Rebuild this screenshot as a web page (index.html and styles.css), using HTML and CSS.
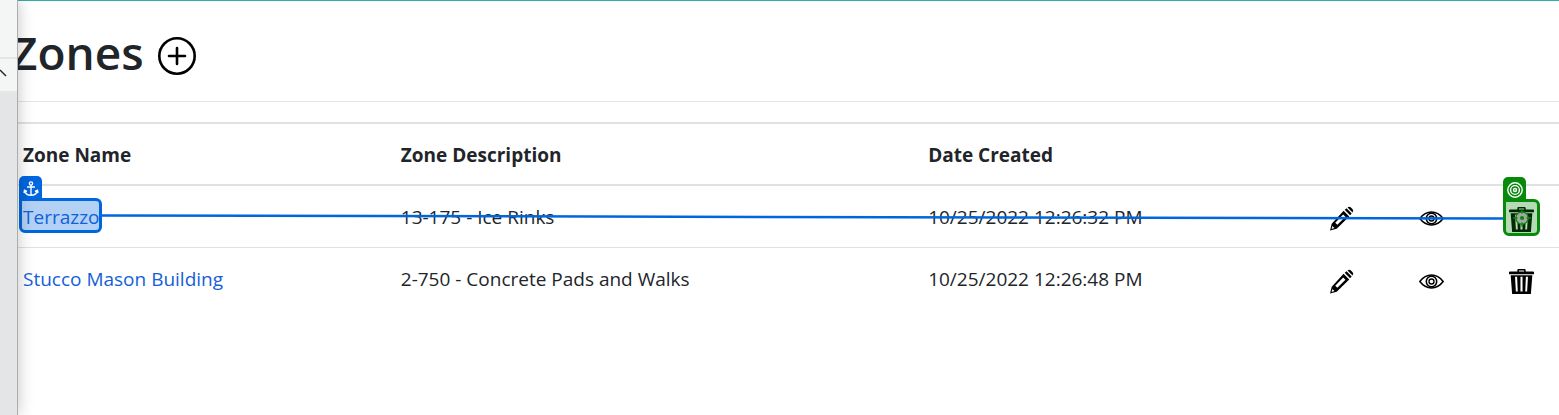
FILE: index.html
```html
<!DOCTYPE html>
<html lang="en">
<head>
<meta charset="utf-8">
<title>Zones</title>
<link rel="stylesheet" href="styles.css">
</head>
<body>
<svg class="defs" aria-hidden="true">
  <symbol id="pencil" viewBox="0 0 24 24">
    <path fill-rule="evenodd" d="M14 4.600 19.400 10 7.400 21.800 1 23.400 2.600 17ZM13.600 8.200 6 16 8 18 15.800 10.400ZM3.300 19.200 2.500 22 5.200 21.200Z"/>
    <path d="M15.100 3.700 16.800 2.200 21.800 7.200 20.200 8.800ZM17.800 1.400Q19.400 0 20.800 1.300L22.700 3.200Q24 4.700 22.600 6.200Z"/>
  </symbol>
  <symbol id="eye" viewBox="0 0 24 24">
    <g fill="none" stroke="currentColor" stroke-width="1.500">
      <path d="M.8 12Q5.500 5.800 12 5.800T23.200 12Q18.500 18.200 12 18.200T.8 12Z"/>
      <circle cx="12" cy="12" r="5"/>
      <circle cx="12" cy="12" r="2.400" stroke-width="1.300"/>
    </g>
  </symbol>
  <symbol id="trash" viewBox="0 0 24 24">
    <path d="M0 5V3.200Q0 2.500 1 2.500H8V1Q8 0 9 0H15Q16 0 16 1V2.500H23Q24 2.500 24 3.200V5ZM9.500 2.500H14.500V1.400H9.500Z"/>
    <path fill-rule="evenodd" d="M1.600 6H22.400L21 24H3ZM5.800 7.500 6.600 21.500H8.400L7.800 7.500ZM11 7.500V21.500H13V7.500ZM16.200 7.500 15.600 21.500H17.400L18.200 7.500Z"/>
  </symbol>
</svg>

<aside class="side-window">
  <div class="side-top"></div>
  <div class="side-tool">
    <svg class="side-caret" viewBox="0 0 8 12" aria-hidden="true"><path d="M0 3 6 9"/></svg>
  </div>
</aside>

<main class="page">
  <header class="page-head">
    <h1>Zones</h1>
    <button class="add" type="button" aria-label="Add zone">
      <svg viewBox="0 0 38 38" aria-hidden="true"><circle cx="19" cy="19" r="17.700"/><path d="M19 11V27M11 19H27"/></svg>
    </button>
  </header>

  <div class="zone-list">
    <table class="zones">
      <colgroup>
        <col class="col-name"><col class="col-desc"><col>
        <col class="col-icon"><col class="col-icon"><col class="col-last">
      </colgroup>
      <thead>
        <tr><th>Zone Name</th><th>Zone Description</th><th>Date Created</th><td></td><td></td><td></td></tr>
      </thead>
      <tbody>
        <tr>
          <td>
            <span class="anchor-point">
              <a href="#terrazzo">Terrazzo</a>
              <span class="mark mark-start">
                <span class="tab">
                  <svg viewBox="0 0 16 16" aria-hidden="true"><circle cx="8" cy="2.500" r="1.600"/><path d="M8 4V14M4 6H12M1.500 9.500Q2.500 14.300 8 14.300T14.500 9.500M1 12 1.500 9.300 4 10.500M15 12 14.500 9.300 12 10.500"/></svg>
                </span>
              </span>
            </span>
          </td>
          <td>13-175 - Ice Rinks</td>
          <td>10/25/2022 12:26:32 PM</td>
          <td><button class="icon" type="button" aria-label="Edit Terrazzo"><svg><use href="#pencil"/></svg></button></td>
          <td><button class="icon" type="button" aria-label="View Terrazzo"><svg><use href="#eye"/></svg></button></td>
          <td>
            <span class="anchor-point">
              <button class="icon" type="button" aria-label="Delete Terrazzo"><svg><use href="#trash"/></svg></button>
              <span class="mark mark-end">
                <span class="tab">
                  <svg viewBox="0 0 16 16" aria-hidden="true"><circle cx="8" cy="8" r="7.200"/><circle cx="8" cy="8" r="4.400"/><circle cx="8" cy="8" r="1.500"/></svg>
                </span>
                <svg class="crosshair" viewBox="0 0 16 16" aria-hidden="true"><circle class="halo" cx="8" cy="8" r="3.500"/><circle class="ring" cx="8" cy="8" r="5.500"/><path d="M8 0V4M8 12V16M0 8H4M12 8H16"/><circle class="dot" cx="8" cy="8" r="1.700"/></svg>
              </span>
            </span>
          </td>
        </tr>
        <tr>
          <td><a href="#stucco">Stucco Mason Building</a></td>
          <td>2-750 - Concrete Pads and Walks</td>
          <td>10/25/2022 12:26:48 PM</td>
          <td><button class="icon" type="button" aria-label="Edit Stucco Mason Building"><svg><use href="#pencil"/></svg></button></td>
          <td><button class="icon" type="button" aria-label="View Stucco Mason Building"><svg><use href="#eye"/></svg></button></td>
          <td><button class="icon" type="button" aria-label="Delete Stucco Mason Building"><svg><use href="#trash"/></svg></button></td>
        </tr>
      </tbody>
    </table>
    <svg class="connector" viewBox="0 0 100 6" preserveAspectRatio="none" aria-hidden="true"><path d="M0 1.500 100 4.500"/></svg>
  </div>
</main>
</body>
</html>
```
FILE: styles.css
```css
* { box-sizing: border-box; }

body {
  margin: 0;
  min-height: 100vh;
  position: relative;
  background: #fff;
  color: #212529;
  font-family: "Segoe UI", "Open Sans", "Noto Sans", sans-serif;
  font-size: 19px;
  line-height: 30px;
  overflow-x: hidden;
}

.defs { position: absolute; width: 0; height: 0; }

/* Window edge that covers the left side of the page */
.side-window {
  position: absolute;
  z-index: 2;
  top: 0;
  bottom: 0;
  left: 0;
  width: 18px;
  background: #e3e5e6;
  border-right: 1px solid #adadad;
  box-shadow: 0 0 16px rgba(0, 0, 0, 0.24);
}
.side-top { height: 59px; background: #f4f6f6; border-bottom: 2px solid #e3e5e6; }
.side-tool { height: 32px; padding-top: 8px; background: #f4f6f6; }
.side-caret { display: block; width: 8px; height: 12px; fill: none; stroke: #222; stroke-width: 1.5; }

.page { padding-left: 17px; border-top: 1px solid #36aba6; }

.page-head {
  display: flex;
  align-items: center;
  gap: 14px;
  height: 101px;
  margin-left: -6px;
  padding-top: 2px;
  border-bottom: 1px solid #e5e5e5;
}
h1 { margin: 0; font-size: 46px; font-weight: 600; line-height: 60px; }
.add { padding: 8px 0 0; border: 0; background: none; color: #000; }
.add svg { display: block; width: 38px; height: 38px; fill: none; stroke: currentColor; stroke-width: 2.6; stroke-linecap: round; }

.zone-list { position: relative; margin-top: 20px; }
.zones { width: 100%; table-layout: fixed; border-collapse: separate; border-spacing: 0; border-top: 2px solid #dee2e6; }
.col-name { width: 24.5%; }
.col-desc { width: 34.2%; }
.col-icon { width: 90px; }
.col-last { width: 56px; }

th, td { height: 62px; padding: 0 6px; text-align: left; vertical-align: middle; white-space: nowrap; }
th { padding-top: 2px; font-weight: 700; }
thead th, thead td { border-bottom: 2px solid #dee2e6; }
tbody tr:first-child td { border-bottom: 1px solid #dee2e6; }

a { color: #1560d8; text-decoration: none; }

.icon { display: block; width: 25px; height: 25px; margin-top: 4px; padding: 0; border: 0; background: none; color: #000; }
.icon svg { display: block; width: 25px; height: 25px; }
.icon use { fill: currentColor; }

/* Highlighted ends of the connector */
.anchor-point { display: inline-block; position: relative; vertical-align: middle; }
.mark { position: absolute; border: 3px solid; border-radius: 0 6px 6px 6px; }
.mark-start { inset: -4px -3px -1px -4px; border-color: #0066df; background: rgba(0, 102, 223, 0.3); }
.mark-end { inset: -4px -6px -4px -6px; border-color: #07890b; background: rgba(7, 137, 11, 0.3); }
.tab {
  position: absolute;
  left: -3px;
  bottom: 100%;
  display: grid;
  place-items: center;
  width: 23px;
  height: 25px;
  border-radius: 5px 5px 0 0;
}
.mark-start .tab { background: #0066df; }
.mark-end .tab { background: #07890b; }
.tab svg { width: 16px; height: 16px; fill: none; stroke: #fff; stroke-width: 1.4; }
.crosshair { position: absolute; inset: 0; width: 18px; height: 18px; margin: auto; fill: none; stroke: #07890b; stroke-width: 1.2; }
.crosshair .halo { stroke: #a6a6a6; stroke-width: 4; }
.crosshair .dot { fill: #07890b; stroke: none; }

.connector { position: absolute; top: 92px; left: 85px; width: calc(100% - 141px); height: 6px; overflow: visible; pointer-events: none; }
.connector path { fill: none; stroke: #0066df; stroke-width: 2.5; vector-effect: non-scaling-stroke; }
```
